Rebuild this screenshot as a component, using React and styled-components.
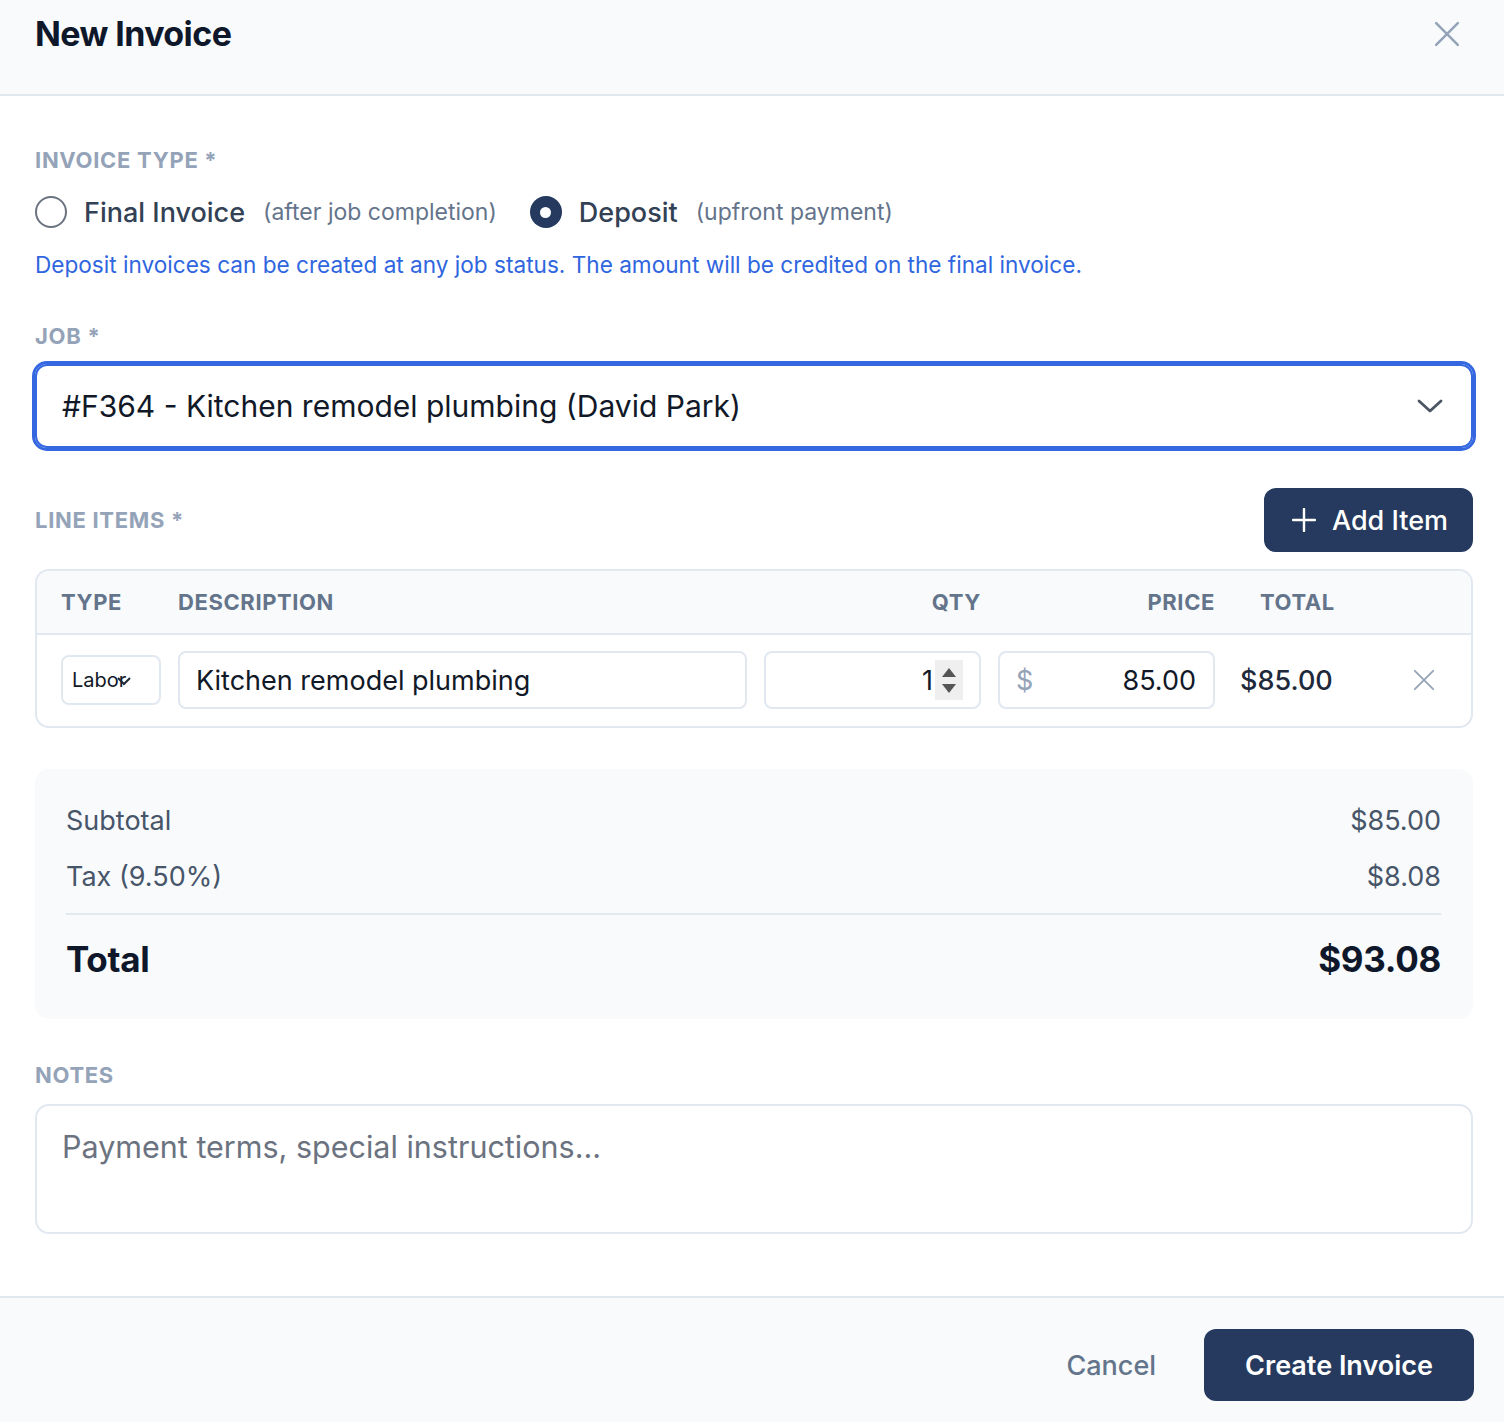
import React from "react";
import styled, { createGlobalStyle } from "styled-components";

const navy = "#253a5e";
const line = "#e2e8f0";
const soft = "#f8fafc";

const GlobalStyle = createGlobalStyle`
  body {
    margin: 0;
    background: #fff;
    font-family: Inter, "Liberation Sans", sans-serif;
    color: #1e293b;
  }
  * { box-sizing: border-box; }
`;

const Modal = styled.div`
  width: 1504px;
  min-height: 1422px;
  display: flex;
  flex-direction: column;
  background: #fff;
`;

const Header = styled.div`
  height: 96px;
  padding: 12px 44px 0 35px;
  background: ${soft};
  border-bottom: 2px solid ${line};
  display: flex;
  justify-content: space-between;
  align-items: flex-start;
`;

const Title = styled.h1`
  margin: 0;
  font-size: 34px;
  line-height: 44px;
  font-weight: 700;
  letter-spacing: -0.6px;
  color: #0f172a;
`;

const CloseBtn = styled.button`
  border: none;
  background: none;
  padding: 0;
  margin-top: 9px;
  width: 26px;
  height: 26px;
  display: flex;
  cursor: pointer;
`;

const Body = styled.div`
  padding: 50px 31px 0 35px;
  display: flex;
  flex-direction: column;
`;

const Label = styled.div`
  font-size: 22px;
  line-height: 28px;
  font-weight: 700;
  letter-spacing: 0.7px;
  text-transform: uppercase;
  color: #94a3b8;
  margin-top: ${(p) => p.mt || 0}px;
`;

const RadioRow = styled.div`
  display: flex;
  align-items: center;
  height: 36px;
  margin-top: 20px;
`;

const RadioOption = styled.label`
  display: flex;
  align-items: center;
  margin-right: 33px;
`;

const RadioCircle = styled.span`
  width: 32px;
  height: 32px;
  border-radius: 50%;
  display: flex;
  align-items: center;
  justify-content: center;
  border: ${(p) => (p.checked ? "none" : "2px solid #6b7280")};
  background: ${(p) => (p.checked ? navy : "#fff")};
  margin-right: 17px;
  &::after {
    content: "";
    display: ${(p) => (p.checked ? "block" : "none")};
    width: 11px;
    height: 11px;
    border-radius: 50%;
    background: #fff;
  }
`;

const RadioText = styled.span`
  font-size: 27px;
  font-weight: 500;
  color: #334155;
  margin-right: 18px;
`;

const RadioHint = styled.span`
  font-size: 23px;
  color: #64748b;
`;

const Hint = styled.p`
  margin: 19px 0 0;
  font-size: 22.6px;
  line-height: 32px;
  color: #2f66e0;
`;

const SelectBox = styled.div`
  margin-top: 14px;
  height: 84px;
  border: 2px solid #3467e0;
  box-shadow: 0 0 0 3px #3467e0;
  border-radius: 12px;
  padding: 0 28px 0 25px;
  display: flex;
  align-items: center;
  justify-content: space-between;
  font-size: 30px;
  color: #111827;
`;

const SectionHead = styled.div`
  margin-top: 40px;
  display: flex;
  align-items: center;
  justify-content: space-between;
`;

const DarkButton = styled.button`
  border: none;
  background: ${navy};
  color: #fff;
  font-family: inherit;
  border-radius: 12px;
  display: flex;
  align-items: center;
  gap: 16px;
  cursor: pointer;
  height: ${(p) => p.h}px;
  padding: 0 ${(p) => p.pr}px 0 ${(p) => p.pl}px;
  font-size: 27px;
  font-weight: ${(p) => p.weight || 500};
`;

const Table = styled.div`
  margin-top: 17px;
  border: 2px solid ${line};
  border-radius: 14px;
  overflow: hidden;
`;

const Grid = styled.div`
  display: grid;
  grid-template-columns: 100px 1fr 217px 217px 158px 40px;
  column-gap: 17px;
  align-items: center;
  padding: 0 24px;
`;

const HeadRow = styled(Grid)`
  height: 64px;
  background: ${soft};
  border-bottom: 2px solid ${line};
`;

const HeadCell = styled.div`
  font-size: 22px;
  font-weight: 700;
  letter-spacing: 0.6px;
  color: #64748b;
  text-align: ${(p) => p.align || "left"};
  padding-left: ${(p) => p.pl || 0}px;
`;

const ItemRow = styled(Grid)`
  padding-top: 16px;
  padding-bottom: 17px;
`;

const Field = styled.div`
  height: ${(p) => p.h || 58}px;
  border: 2px solid ${line};
  border-radius: 8px;
  background: #fff;
  display: flex;
  align-items: center;
  justify-content: ${(p) => p.justify || "flex-start"};
  padding: 0 ${(p) => p.pr || 16}px 0 ${(p) => p.pl || 16}px;
  font-size: ${(p) => p.fs || 27}px;
  color: #111827;
`;

const Caret = styled.span`
  display: inline-flex;
  margin-left: -9px;
  margin-top: 2px;
`;

const Spinner = styled.span`
  width: 28px;
  height: 40px;
  margin-left: 2px;
  background: #efefef;
  display: flex;
  flex-direction: column;
  align-items: center;
  justify-content: center;
  gap: 7px;
`;

const Dollar = styled.span`
  color: #94a3b8;
  margin-right: auto;
`;

const TotalCell = styled.div`
  font-size: 27px;
  font-weight: 500;
  color: #1e293b;
  padding-left: 8px;
`;

const IconBtn = styled.button`
  border: none;
  background: none;
  padding: 0 6px 0 0;
  display: flex;
  justify-content: center;
  cursor: pointer;
`;

const Summary = styled.div`
  margin-top: 41px;
  background: ${soft};
  border-radius: 14px;
  padding: 34px 32px 38px 31px;
`;

const SumRow = styled.div`
  display: flex;
  justify-content: space-between;
  align-items: center;
  font-size: ${(p) => (p.big ? 35 : 27)}px;
  line-height: ${(p) => (p.big ? 44 : 36)}px;
  font-weight: ${(p) => (p.big ? 700 : 400)};
  letter-spacing: ${(p) => (p.big ? "-0.3px" : "0")};
  color: ${(p) => (p.big ? "#0f172a" : "#475569")};
  margin-top: ${(p) => p.mt || 0}px;
`;

const Divider = styled.div`
  height: 2px;
  background: ${line};
  margin-top: 18px;
`;

const Notes = styled.div`
  margin-top: 15px;
  height: 130px;
  border: 2px solid ${line};
  border-radius: 14px;
  padding: 22px 25px;
  font-size: 30.5px;
  line-height: 38px;
  color: #6b7280;
`;

const Footer = styled.div`
  margin-top: 62px;
  flex: 1;
  background: ${soft};
  border-top: 2px solid ${line};
  padding: 31px 30px 20px;
  display: flex;
  justify-content: flex-end;
  align-items: flex-start;
  gap: 24px;
`;

const CancelBtn = styled.button`
  border: none;
  background: none;
  font-family: inherit;
  font-size: 27px;
  font-weight: 500;
  color: #64748b;
  height: 72px;
  padding: 0 24px;
  cursor: pointer;
`;

const XIcon = ({ size, stroke, width }) => (
  <svg width={size} height={size} viewBox="0 0 24 24" fill="none">
    <path d="M2 2L22 22M22 2L2 22" stroke={stroke} strokeWidth={width} strokeLinecap="round" />
  </svg>
);

const App = () => {
  return (
    <Modal>
      <GlobalStyle />
      <Header>
        <Title>New Invoice</Title>
        <CloseBtn>
          <XIcon size={26} stroke="#94a3b8" width={2.3} />
        </CloseBtn>
      </Header>

      <Body>
        <Label>Invoice Type *</Label>
        <RadioRow>
          <RadioOption>
            <RadioCircle />
            <RadioText>Final Invoice</RadioText>
            <RadioHint>(after job completion)</RadioHint>
          </RadioOption>
          <RadioOption>
            <RadioCircle checked />
            <RadioText>Deposit</RadioText>
            <RadioHint>(upfront payment)</RadioHint>
          </RadioOption>
        </RadioRow>
        <Hint>
          Deposit invoices can be created at any job status. The amount will be
          credited on the final invoice.
        </Hint>

        <Label mt={41}>Job *</Label>
        <SelectBox>
          <span>#F364 - Kitchen remodel plumbing (David Park)</span>
          <svg width="26" height="16" viewBox="0 0 26 16" fill="none">
            <path d="M2 3L13 13L24 3" stroke="#4b5563" strokeWidth="2.8" strokeLinecap="round" strokeLinejoin="round" />
          </svg>
        </SelectBox>

        <SectionHead>
          <Label>Line Items *</Label>
          <DarkButton h={64} pl={28} pr={25}>
            <svg width="24" height="24" viewBox="0 0 24 24" fill="none">
              <path d="M12 1V23M1 12H23" stroke="#fff" strokeWidth="2.4" strokeLinecap="round" />
            </svg>
            Add Item
          </DarkButton>
        </SectionHead>

        <Table>
          <HeadRow>
            <HeadCell>TYPE</HeadCell>
            <HeadCell>DESCRIPTION</HeadCell>
            <HeadCell align="right">QTY</HeadCell>
            <HeadCell align="right">PRICE</HeadCell>
            <HeadCell pl={28}>TOTAL</HeadCell>
            <span />
          </HeadRow>
          <ItemRow>
            <Field h={50} fs={20} pl={9} pr={6}>
              Labor
              <Caret>
                <svg width="14" height="10" viewBox="0 0 14 10" fill="none">
                  <path d="M1 2L7 8L13 2" stroke="#1f2937" strokeWidth="2" />
                </svg>
              </Caret>
            </Field>
            <Field>Kitchen remodel plumbing</Field>
            <Field justify="flex-end" pr={16}>
              1
              <Spinner>
                <svg width="14" height="9" viewBox="0 0 14 9">
                  <path d="M7 0L14 9H0Z" fill="#555" />
                </svg>
                <svg width="14" height="9" viewBox="0 0 14 9">
                  <path d="M0 0H14L7 9Z" fill="#555" />
                </svg>
              </Spinner>
            </Field>
            <Field pr={17}>
              <Dollar>$</Dollar>
              85.00
            </Field>
            <TotalCell>$85.00</TotalCell>
            <IconBtn>
              <XIcon size={22} stroke="#94a3b8" width={2} />
            </IconBtn>
          </ItemRow>
        </Table>

        <Summary>
          <SumRow>
            <span>Subtotal</span>
            <span>$85.00</span>
          </SumRow>
          <SumRow mt={20}>
            <span>Tax (9.50%)</span>
            <span>$8.08</span>
          </SumRow>
          <Divider />
          <SumRow big mt={22}>
            <span>Total</span>
            <span>$93.08</span>
          </SumRow>
        </Summary>

        <Label mt={42}>Notes</Label>
        <Notes>Payment terms, special instructions...</Notes>
      </Body>

      <Footer>
        <CancelBtn>Cancel</CancelBtn>
        <DarkButton h={72} pl={41} pr={41} weight={600}>
          Create Invoice
        </DarkButton>
      </Footer>
    </Modal>
  );
};

export default App;
